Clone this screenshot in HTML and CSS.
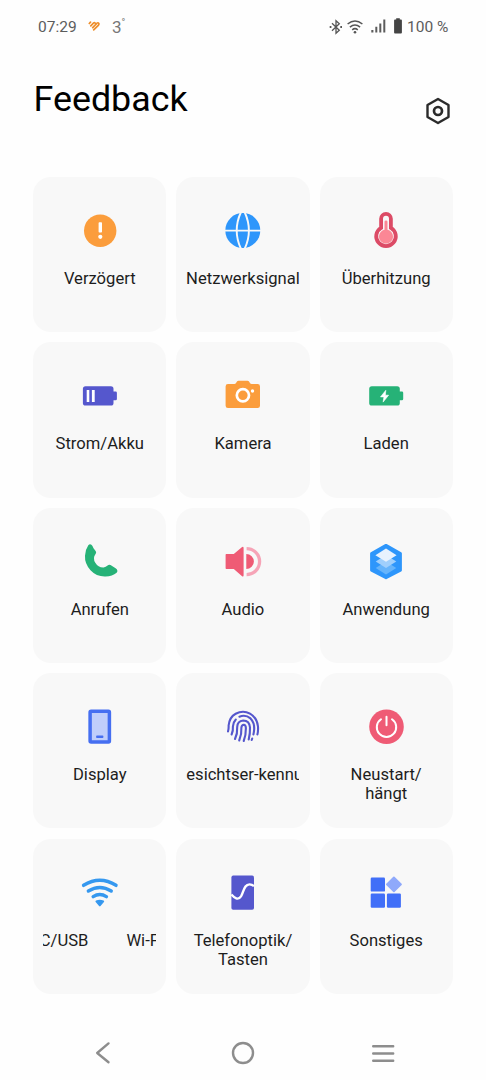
FILE: index.html
```html
<!DOCTYPE html>
<html lang="de">
<head>
<meta charset="utf-8">
<title>Feedback</title>
<link rel="stylesheet" href="styles.css">
</head>
<body>
<div class="screen">
  <div class="status">
    <span class="time">07:29</span>
    <svg class="heart" width="12" height="12" viewBox="0 0 12 12" fill="none" stroke="#ee8e2b" stroke-width="1.7" stroke-linecap="round"><path d="M1.3 3.5 2.5 2.2M2.8 5.8 5.6 3Q6.5 2.3 7.3 3.2M4.7 7.6 8.8 3.3Q10 2.2 10.8 3.4Q11.2 4.4 10.3 5.3L5.7 9.8"/></svg>
    <span class="temp">3<sup>°</sup></span>
    <span class="spacer"></span>
    <svg class="bt" width="14" height="16" viewBox="0 0 14 16" fill="none" stroke="#555" stroke-width="1.3"><path d="M3 4.3 10.3 11.2 7 14.2V1.8L10.3 4.8 3 11.7"/><path d="M.7 8H2.4M11.3 8H13" stroke-width="1.8"/></svg>
    <svg class="wf" width="16" height="14" viewBox="0 0 16 14" fill="none" stroke="#555" stroke-width="1.5"><path d="M.6 4Q8-1.800 15.400 4M2.900 7.100Q8 2.800 13.100 7.100M5.200 9.800Q8 7.500 10.800 9.800"/><circle cx="8" cy="12.200" r="1.300" fill="#555" stroke="none"/></svg>
    <svg class="sig" width="15" height="14" viewBox="0 0 15 14" fill="#5c5c5c"><path d="M.3 11h2.100v2.600H.3zM4.300 7.800h2v5.800h-2zM8.300 4.500h2v9.100h-2zM12.300.6h2v13h-2z"/></svg>
    <svg class="bat" width="8" height="16" viewBox="0 0 8 16" fill="#444"><path d="M2.200.3h3.600v1.200h1.200q.9 0 .9.900v12.200q0 .9-.9.900H1q-.9 0-.9-.9V2.400q0-.9.9-.9h1.200z"/></svg>
    <span class="pct">100 %</span>
  </div>
  <header class="head">
    <h1>Feedback</h1>
    <svg class="gear" width="26" height="28" viewBox="0 0 26 28" fill="none" stroke="#2b2b2b" stroke-linejoin="round"><path d="M13 2 23.500 8V20L13 26 2.500 20V8Z" stroke-width="2.400"/><circle cx="13" cy="14" r="4" stroke-width="2.700"/></svg>
  </header>
  <main class="grid">
    <div class="card">
      <svg viewBox="0 0 44 44"><circle cx="22.200" cy="21.800" r="16.200" fill="#fb9d3c"/><rect x="20.600" y="13.200" width="3.400" height="10.400" rx=".8" fill="#fff"/><circle cx="22.300" cy="27.800" r="2.100" fill="#fff"/></svg>
      <div class="label">Verzögert</div>
    </div>
    <div class="card">
      <svg viewBox="0 0 44 44"><circle cx="21.800" cy="21.500" r="17.500" fill="#2e96fb"/><path d="M4 21.600H40M19.800 3.500Q11.600 21.500 19.800 39.500M23.800 3.500Q32 21.500 23.800 39.500" fill="none" stroke="#f8f8f8" stroke-width="1.900"/></svg>
      <div class="label">Netzwerksignal</div>
    </div>
    <div class="card">
      <svg viewBox="0 0 44 44"><path d="M17.100 9.800a4.900 4.900 0 0 1 9.800 0V18.800a9.800 9.800 0 1 1-9.800 0Z" fill="#f8f8f8" stroke="#dc4b66" stroke-width="3.800"/><path d="M20.500 12.800q0-1.300 1.500-1.300t1.500 1.300V20.800a7 7 0 1 1-3 0Z" fill="#fb8795"/></svg>
      <div class="label">Überhitzung</div>
    </div>
    <div class="card">
      <svg viewBox="0 0 44 44"><rect x="4.900" y="12.300" width="30.600" height="19.300" rx="2.600" fill="#5557cd"/><path d="M35 17.400h2.600q1.300 0 1.300 1.300v6.200q0 1.300-1.300 1.300H35z" fill="#5557cd"/><path d="M8.700 16h2.600v12H8.700zM13.900 16h2.800v12h-2.800z" fill="#fff"/></svg>
      <div class="label">Strom/Akku</div>
    </div>
    <div class="card">
      <svg viewBox="0 0 44 44"><path d="M7 10h6.300q1.200 0 1.900-1.300l.6-1Q16.400 6.700 17.600 6.700h8.800q1.200 0 1.800 1l.6 1Q29.500 10 30.700 10H36.600q2.400 0 2.400 2.400V31.700q0 2.400-2.400 2.400H7q-2.400 0-2.400-2.400V12.400Q4.600 10 7 10Z" fill="#fb9d3c"/><circle cx="21.900" cy="21.300" r="6.100" fill="none" stroke="#fff" stroke-width="2.700"/><circle cx="31.500" cy="17" r="1.700" fill="#fff"/></svg>
      <div class="label">Kamera</div>
    </div>
    <div class="card">
      <svg viewBox="0 0 44 44"><rect x="5.200" y="12.300" width="30.600" height="19.300" rx="2.600" fill="#26b277"/><path d="M35 17.400h2.900q1.300 0 1.300 1.300v6.200q0 1.300-1.300 1.300H35z" fill="#26b277"/><path d="M21.800 16.300 16.500 22.900H19.900L19.100 28.100 24.600 21.200H21.400Z" fill="#fff" stroke="#fff" stroke-width=".6" stroke-linejoin="round"/></svg>
      <div class="label">Laden</div>
    </div>
    <div class="card">
      <svg viewBox="0 0 44 44"><path d="M10.300 5.300Q11.700 3.600 13.400 4.700Q14.500 5.600 15.500 8.300L17.800 11.300Q18.700 12.700 17.400 14.200Q14.500 18 17.300 22.800Q20.200 27.700 25.600 27.500Q27.800 27.300 29.600 25.600Q30.900 24.300 32.500 25L37.600 28.200Q40.600 30.400 38.600 32.800Q34.500 36.500 27.500 36.500Q18.500 36.800 12.500 30.300Q6.500 23.500 7 15.800Q7.300 9.600 10.300 5.300Z" fill="#26b277"/></svg>
      <div class="label">Anrufen</div>
    </div>
    <div class="card">
      <svg viewBox="0 0 44 44"><path d="M5.300 14q-.7 0-.7.700V28.200q0 .7.700.7H12.800L20.800 35.900Q22.600 37.200 22.600 35.200V8.200Q22.600 6 20.800 7.200L12.800 14Z" fill="#ef5b75"/><path d="M25.300 13.900a7.600 7.600 0 0 1 0 15.200Z" fill="#ef5b75"/><path d="M25.600 8.600a13 13 0 0 1 0 26" fill="none" stroke="#f6a4b7" stroke-width="3.300"/></svg>
      <div class="label">Audio</div>
    </div>
    <div class="card">
      <svg viewBox="0 0 44 44"><path d="M22 5.300 36.500 13.400V30.200L22 37.800 7.500 30.200V13.400Z" fill="#2e96fb" stroke="#2e96fb" stroke-width="2.800" stroke-linejoin="round"/><path d="M22 21.500 32.300 28 22 34.500 11.700 28Z" fill="#66b4fb"/><path d="M22 15.100 32.300 21.600 22 28.100 11.700 21.600Z" fill="#a0cffc"/><path d="M22 8.500 32.600 15.200 22 21.800 11.400 15.200Z" fill="#e8f2fe"/></svg>
      <div class="label">Anwendung</div>
    </div>
    <div class="card">
      <svg viewBox="0 0 44 44"><rect x="12.100" y="6.300" width="19.300" height="30.800" rx="1" fill="#c0cefb" stroke="#466ff1" stroke-width="3.500"/><rect x="18.100" y="30.600" width="7.300" height="2.500" rx=".8" fill="#466ff1"/></svg>
      <div class="label">Display</div>
    </div>
    <div class="card">
      <svg viewBox="0 0 44 44" fill="none" stroke="#5557cd" stroke-width="2.100" stroke-linecap="round"><path d="M7 26.500Q7.800 24 7.600 20.500Q8.500 12 14.700 8.700Q22 4.800 29 8.600Q36 12.800 37 21.500Q37.300 26 36.400 29.500"/><path d="M10.600 29.500Q12.300 26 11.900 21.500Q12 17.500 14.800 14.500M18.400 11.700Q24.500 9.300 29.500 13.400Q33.500 17.500 33.200 24Q33 27 32.400 29.500"/><path d="M14 34Q16.600 28.500 16.200 22Q16.400 16 22.200 15.500Q28.500 15.600 29 22.500Q29.200 28.500 27.700 34.500"/><path d="M18.200 35.500Q20.800 29.500 20.400 22.500Q20.800 19.800 22.700 19.800Q24.800 20 24.900 23Q25 30 22.700 36M31.200 33.500 30.700 35"/></svg>
      <div class="label label-face">Gesichtser-kennung</div>
    </div>
    <div class="card">
      <svg viewBox="0 0 44 44"><circle cx="22.500" cy="21.700" r="17.300" fill="#ef5b75"/><path d="M22.500 11.800V20.200M17 14.200a9.700 9.700 0 1 0 11 0" fill="none" stroke="#fff" stroke-width="2" stroke-linecap="round"/></svg>
      <div class="label">Neustart/<br>hängt</div>
    </div>
    <div class="card">
      <svg viewBox="0 0 44 44" fill="none" stroke="#3598ef" stroke-width="3.500" stroke-linecap="round"><path d="M5.600 14.300Q21.800 4.300 38 14.300M10.400 20Q21.800 13 33.200 20M15.200 25.600Q21.800 21.300 28.400 25.600"/><path d="M18.400 30.400Q21.800 29 25.200 30.400L21.800 34.400Z" fill="#3598ef" stroke-width="1.900" stroke-linejoin="round"/></svg>
      <div class="label marquee"><span>NFC/USB</span><span>Wi-Fi</span></div>
    </div>
    <div class="card">
      <svg viewBox="0 0 44 44"><rect x="10.400" y="4.600" width="22.600" height="34.200" rx="1.800" fill="#5557cd"/><path d="M10.400 23.500C13.500 27 17 29.800 20 25.300C23 20.300 23 13.300 28.500 13.300Q31 13.300 33 15.200" fill="none" stroke="#fff" stroke-width="2.300"/></svg>
      <div class="label">Telefonoptik/<br>Tasten</div>
    </div>
    <div class="card">
      <svg viewBox="0 0 44 44" fill="#416ff8"><rect x="6.700" y="6.500" width="14.300" height="14.100" rx="1.200"/><rect x="6.700" y="22.600" width="14.300" height="14.100" rx="1.200"/><rect x="22.900" y="22.600" width="14" height="14.100" rx="1.200"/><path d="M29.900 6.400 37 13.400 29.900 20.400 22.900 13.400Z" fill="#8fa9fb" stroke="#8fa9fb" stroke-width="1.800" stroke-linejoin="round"/></svg>
      <div class="label">Sonstiges</div>
    </div>
  </main>
  <nav class="nav">
    <svg viewBox="0 0 30 30"><path d="M20.500 5.400 9.200 15 20.500 24.200"/></svg>
    <svg viewBox="0 0 30 30"><circle cx="15" cy="15" r="10"/></svg>
    <svg viewBox="0 0 30 30"><path d="M4.200 8.300H24.200M4.200 15.500H24.200M4.200 22.700H24.200"/></svg>
  </nav>
</div>
</body>
</html>
```

FILE: styles.css
```css
* { box-sizing: border-box; }
body { margin: 0; background: #fefefe; font-family: Roboto, sans-serif; color: #1d1d1d; }
svg { display: block; flex: none; }
.screen { width: 486px; height: 1080px; overflow: hidden; display: flex; flex-direction: column; }
.status { height: 54px; padding: 0 38px; display: flex; align-items: center; font-size: 16px; color: #5c5c5c; }
.time { width: 50px; font-size: 15.5px; }
.heart { margin-top: -2px; }
.temp { margin-left: 12px; color: #777; font-size: 17px; white-space: nowrap; }
.temp sup { font-size: 10px; line-height: 0; }
.spacer { flex: 1; }
.wf { margin-left: 4px; margin-top: -1px; }
.sig { margin-left: 8px; margin-top: -2px; }
.bat { margin-left: 8px; margin-top: -2px; }
.pct { width: 41px; margin-left: 5px; font-size: 15.5px; white-space: nowrap; }
.head { height: 123px; padding: 0 35.5px 0 33.5px; display: flex; justify-content: space-between; align-items: flex-start; }
.head h1 { margin: 23px 0 0; font-size: 35.8px; line-height: 44px; font-weight: 400; color: #000; }
.gear { margin-top: 42.5px; }
.grid { width: 419.6px; margin-left: 33.2px; display: grid; grid-template-columns: repeat(3, 1fr); grid-auto-rows: 155.2px; gap: 10.2px 10px; }
.card { background: #f8f8f8; border-radius: 18px; padding-top: 32px; display: flex; flex-direction: column; align-items: center; }
.card > svg { width: 44px; height: 44px; }
.label { width: 116px; margin-top: 16px; font-size: 16.6px; line-height: 19.2px; text-align: center; white-space: nowrap; overflow: hidden; }
.label-face { width: 113px; text-align: left; text-indent: -11.5px; }
.marquee { width: 113px; display: flex; gap: 38px; }
.marquee span:first-child { margin-left: -24.5px; }
.nav { margin-top: 44px; padding: 0 87.5px; display: flex; justify-content: space-between; }
.nav svg { width: 30px; height: 30px; fill: none; stroke: #8d8d8d; stroke-width: 2.4; stroke-linecap: round; stroke-linejoin: round; }
```
